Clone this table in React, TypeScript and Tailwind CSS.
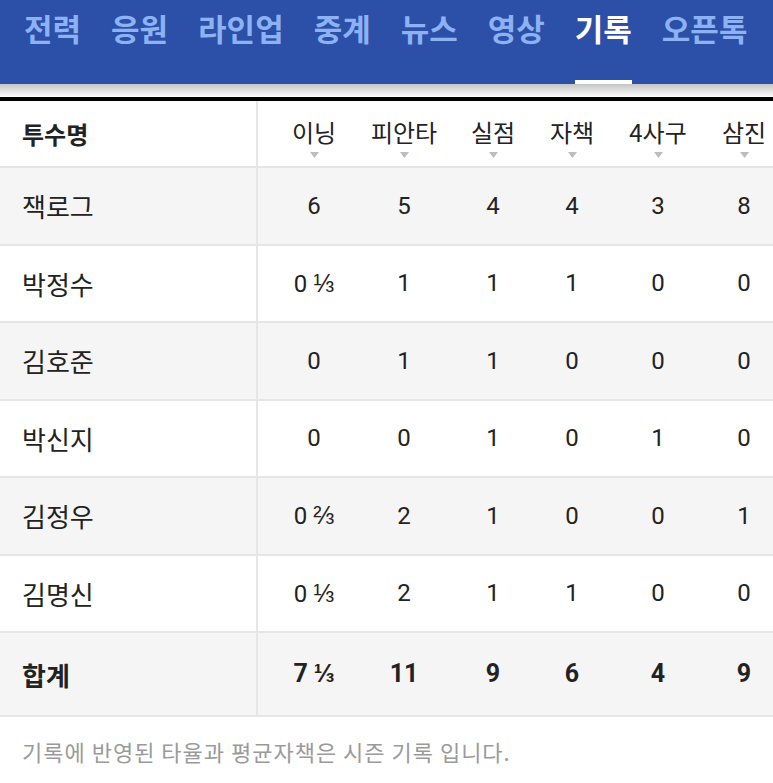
import React from "react";

const tabs = ["전력", "응원", "라인업", "중계", "뉴스", "영상", "기록", "오픈톡"];
const active = "기록";

const columns = [
  { label: "이닝", w: "w-[112px]" },
  { label: "피안타", w: "w-[68px]" },
  { label: "실점", w: "w-[110px]" },
  { label: "자책", w: "w-[48px]" },
  { label: "4사구", w: "w-[124px]" },
  { label: "삼진", w: "w-[48px]" },
];

const rows: { name: string; stats: string[] }[] = [
  { name: "잭로그", stats: ["6", "5", "4", "4", "3", "8"] },
  { name: "박정수", stats: ["0 ⅓", "1", "1", "1", "0", "0"] },
  { name: "김호준", stats: ["0", "1", "1", "0", "0", "0"] },
  { name: "박신지", stats: ["0", "0", "1", "0", "1", "0"] },
  { name: "김정우", stats: ["0 ⅔", "2", "1", "0", "0", "1"] },
  { name: "김명신", stats: ["0 ⅓", "2", "1", "1", "0", "0"] },
];

const total = ["7 ⅓", "11", "9", "6", "4", "9"];

const kr = { fontFamily: '"Noto Sans CJK KR", sans-serif' };

function Stat({ value, bold }: { value: string; bold?: boolean }) {
  const [whole, frac] = value.split(" ");
  return (
    <span className={bold ? "font-bold" : ""}>
      {whole}
      {frac && <span className="ml-[6px] text-[25px]">{frac}</span>}
    </span>
  );
}

export default function App() {
  return (
    <div
      className="w-[773px] h-[783px] overflow-hidden bg-white text-[#222]"
      style={{ fontFamily: 'Roboto, "Noto Sans CJK KR", sans-serif' }}
    >
      <div className="h-[84px] bg-[#2c4fa8] flex gap-[30px] pl-[24px]">
        {tabs.map(t => (
          <div key={t} className="flex flex-col justify-between h-full">
            <span
              className={`pt-[12px] text-[31px] font-bold leading-none ${t === active ? "text-white" : "text-[#8db2f4]"}`}
              style={kr}
            >
              {t}
            </span>
            {t === active && <div className="h-[4px] bg-white" />}
          </div>
        ))}
      </div>
      <div className="h-[13px] bg-linear-to-b from-[#c6c6c6] to-[#fbfbfb]" />
      <div className="h-[4px] bg-black" />

      <div className="flex h-[67px] border-b-2 border-[#e6e6e6]">
        <div
          className="w-[258px] shrink-0 border-r-2 border-[#e6e6e6] flex items-center pl-[22px] text-[24px] font-bold"
          style={kr}
        >
          투수명
        </div>
        {columns.map(c => (
          <div key={c.label} className={`${c.w} shrink-0 flex flex-col items-center pt-[16px]`}>
            <span className="text-[24px] leading-[30px]" style={kr}>
              {c.label}
            </span>
            <svg width="9" height="6" viewBox="0 0 9 6" className="mt-[5px]">
              <path d="M0 0 L9 0 L4.5 6 Z" fill="#bdbdbd" />
            </svg>
          </div>
        ))}
      </div>

      {rows.map((r, i) => (
        <div
          key={r.name}
          className={`flex h-[77.5px] border-b-2 border-[#e6e6e6] ${i % 2 === 0 ? "bg-[#f5f5f5]" : "bg-white"}`}
        >
          <div
            className="w-[258px] shrink-0 border-r-2 border-[#e6e6e6] flex items-center pl-[22px] text-[26px]"
            style={kr}
          >
            {r.name}
          </div>
          {r.stats.map((s, j) => (
            <div key={j} className={`${columns[j].w} shrink-0 flex items-center justify-center text-[24px]`}>
              <Stat value={s} />
            </div>
          ))}
        </div>
      ))}

      <div className="flex h-[84px] border-b-2 border-[#e6e6e6] bg-[#f5f5f5]">
        <div
          className="w-[258px] shrink-0 border-r-2 border-[#e6e6e6] flex items-center pl-[22px] text-[26px] font-bold"
          style={kr}
        >
          합계
        </div>
        {total.map((s, j) => (
          <div key={j} className={`${columns[j].w} shrink-0 flex items-center justify-center text-[25px]`}>
            <Stat value={s} bold />
          </div>
        ))}
      </div>

      <p className="pl-[22px] pt-[18px] text-[22px] text-[#9a9a9a] tracking-[1px]" style={kr}>
        기록에 반영된 타율과 평균자책은 시즌 기록 입니다.
      </p>
    </div>
  );
}
